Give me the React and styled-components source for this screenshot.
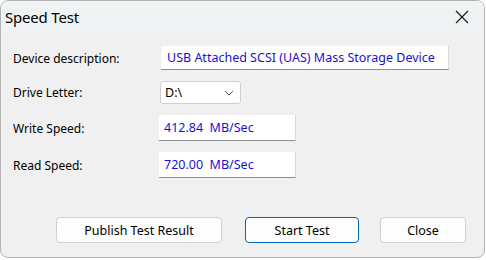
import React from "react";
import styled, { createGlobalStyle } from "styled-components";

const GlobalStyle = createGlobalStyle`
	html, body {
		margin: 0;
		padding: 0;
		background: #ffffff;
	}
	body {
		font-family: "Noto Sans", "Liberation Sans", sans-serif;
	}
`;

const Window = styled.div`
	width: 485px;
	height: 258px;
	box-sizing: border-box;
	border: 1px solid #b4b4b4;
	border-radius: 8px;
	overflow: hidden;
	background: #f0f0f0;
	display: flex;
	flex-direction: column;
`;

const TitleBar = styled.div`
	height: 31px;
	background: #eff3f4;
	display: flex;
	align-items: center;
	justify-content: space-between;
	padding: 0 10px 0 4px;
	flex-shrink: 0;
`;

const Title = styled.span`
	font-size: 15px;
	color: #000;
	letter-spacing: -0.2px;
`;

const CloseIcon = styled.svg`
	width: 14px;
	height: 14px;
	margin-right: 5px;
`;

const Body = styled.div`
	flex: 1;
	display: flex;
	flex-direction: column;
	padding: 14px 12px 0 12px;
`;

const Form = styled.div`
	display: grid;
	grid-template-columns: 146px auto;
	row-gap: 11px;
	align-items: center;
`;

const Label = styled.label`
	font-size: 12px;
	color: #000;
`;

const Edit = styled.div`
	box-sizing: border-box;
	width: ${(p) => p.$width}px;
	height: ${(p) => p.$height}px;
	margin-left: ${(p) => p.$offset || 0}px;
	background: #fff;
	border-bottom: 1px solid #8f8f8f;
	border-right: 1px solid #d9d9d9;
	display: flex;
	align-items: center;
	padding-left: ${(p) => p.$pad || 5}px;
	font-size: 12.5px;
	color: #1a10d8;
	white-space: pre;
`;

const Combo = styled.div`
	box-sizing: border-box;
	width: 81px;
	height: 23px;
	margin-left: 1px;
	background: #fff;
	border: 1px solid #d0d0d0;
	border-radius: 3px;
	display: flex;
	align-items: center;
	justify-content: space-between;
	padding: 0 6px 0 4px;
	font-size: 12.5px;
	color: #000;
`;

const Buttons = styled.div`
	margin-top: auto;
	margin-bottom: 14px;
	display: flex;
	justify-content: flex-end;
	padding-right: 6px;
`;

const Button = styled.button`
	box-sizing: border-box;
	width: ${(p) => p.$width}px;
	height: 26px;
	margin-left: ${(p) => p.$gap}px;
	background: #fdfdfd;
	border: 1px solid ${(p) => (p.$primary ? "#0067c0" : "#d0d0d0")};
	border-radius: 4px;
	font-family: "Noto Sans", "Liberation Sans", sans-serif;
	font-size: 12.5px;
	color: #000;
	padding: 0;
`;

export default function App() {
	return (
		<>
			<GlobalStyle />
			<Window>
				<TitleBar>
					<Title>Speed Test</Title>
					<CloseIcon viewBox="0 0 14 14">
						<path d="M1 1 L13 13 M13 1 L1 13" stroke="#1a1a1a" strokeWidth="1.2" />
					</CloseIcon>
				</TitleBar>
				<Body>
					<Form>
						<Label>Device description:</Label>
						<Edit $width={288} $height={24} $offset={2} $pad={6}>
							USB Attached SCSI (UAS) Mass Storage Device
						</Edit>
						<Label>Drive Letter:</Label>
						<Combo>
							<span>D:\</span>
							<svg width="10" height="6" viewBox="0 0 10 6">
								<path d="M1 1 L5 5 L9 1" fill="none" stroke="#555" strokeWidth="1" />
							</svg>
						</Combo>
						<Label>Write Speed:</Label>
						<Edit $width={137} $height={26}>412.84  MB/Sec</Edit>
						<Label>Read Speed:</Label>
						<Edit $width={137} $height={26}>720.00  MB/Sec</Edit>
					</Form>
					<Buttons>
						<Button $width={166} $gap={0}>Publish Test Result</Button>
						<Button $width={114} $gap={23} $primary>Start Test</Button>
						<Button $width={86} $gap={21}>Close</Button>
					</Buttons>
				</Body>
			</Window>
		</>
	);
}
